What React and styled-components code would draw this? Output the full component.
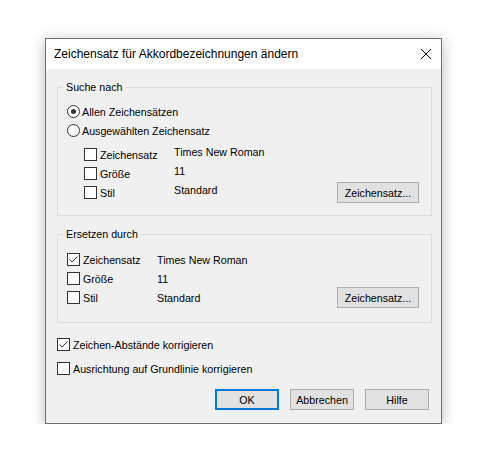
import React from 'react';
import styled, { createGlobalStyle } from 'styled-components';

const font = `"Liberation Sans", Arial, sans-serif`;

const GlobalStyle = createGlobalStyle`
  body {
    margin: 0;
    background: #fff;
    font-family: ${font};
    color: #000;
  }
`;

const Stage = styled.div`
  padding: 38px 0 0 45px;
`;

const Dialog = styled.div`
  width: 397px;
  box-sizing: border-box;
  border: 1px solid #6f6f6f;
  background: #f0f0f0;
  box-shadow: 0 3px 14px rgba(0, 0, 0, 0.28);
  display: flex;
  flex-direction: column;
`;

const TitleBar = styled.div`
  height: 30px;
  background: #fff;
  display: flex;
  align-items: center;
  padding-left: 8px;
`;

const Title = styled.div`
  flex: 1;
  font-size: 12px;
`;

const CloseButton = styled.div`
  width: 30px;
  height: 30px;
  display: flex;
  align-items: center;
  justify-content: center;
`;

const Body = styled.div`
  display: flex;
  flex-direction: column;
  padding: 10px 9px 13px 11px;
  font-size: 10.7px;
`;

const Group = styled.fieldset`
  margin: 0 0 ${(p) => p.$after || 0}px;
  padding: 0;
  border: 1px solid #dcdcdc;
  min-width: 0;
`;

const Legend = styled.legend`
  margin-left: 5px;
  padding: 0 3px;
  line-height: 16px;
  font-size: 10.7px;
`;

const GroupContent = styled.div`
  display: flex;
  flex-direction: column;
  padding: ${(p) => p.$top}px 12px ${(p) => p.$bottom}px 9px;
`;

const Row = styled.div`
  display: flex;
  align-items: center;
  height: 19px;
  margin-top: ${(p) => p.$space || 0}px;
  padding-left: ${(p) => p.$indent || 0}px;
`;

const Field = styled.div`
  width: 90px;
  display: flex;
  align-items: center;
  gap: 3px;
  flex-shrink: 0;
`;

const Choice = styled.div`
  display: flex;
  align-items: center;
  gap: ${(p) => p.$gap || 3}px;
`;

const Value = styled.div`
  flex: 1;
  line-height: 16px;
  margin-bottom: ${(p) => (p.$raised ? 5 : 0)}px;
`;

const Radio = styled.span`
  width: 13px;
  height: 13px;
  box-sizing: border-box;
  border: 1px solid #333;
  border-radius: 50%;
  background: #fff;
  display: flex;
  align-items: center;
  justify-content: center;

  &::after {
    content: '';
    display: ${(p) => (p.$checked ? 'block' : 'none')};
    width: 5px;
    height: 5px;
    border-radius: 50%;
    background: #333;
  }
`;

const Box = styled.span`
  width: 13px;
  height: 13px;
  box-sizing: border-box;
  border: 1px solid #333;
  background: #fff;
  flex-shrink: 0;
  display: flex;

  svg {
    display: block;
  }
`;

const Button = styled.button`
  width: ${(p) => p.$width || 64}px;
  height: 21px;
  margin: ${(p) => (p.$inRow ? '-1px 0' : '0')};
  box-sizing: border-box;
  padding: 0;
  font-family: ${font};
  font-size: 10.7px;
  color: #000;
  background: #e1e1e1;
  border: ${(p) => (p.$default ? '2px solid #0078d7' : '1px solid #adadad')};
  border-radius: 0;
`;

const ButtonBar = styled.div`
  display: flex;
  justify-content: flex-end;
  gap: 11px;
  padding-right: 3px;
  margin-top: 11px;
`;

const CheckBox = ({ checked }) => (
  <Box>
    {checked && (
      <svg width="11" height="11" viewBox="0 0 11 11">
        <path d="M1.5 5.5 L4 8 L9.5 2.5" fill="none" stroke="#333" strokeWidth="1" />
      </svg>
    )}
  </Box>
);

const FontRow = ({ label, value, checked, indent, space, raised, button }) => (
  <Row $indent={indent} $space={space}>
    <Field>
      <CheckBox checked={checked} />
      <span>{label}</span>
    </Field>
    <Value $raised={raised}>{value}</Value>
    {button && (
      <Button $width={82} $inRow>
        Zeichensatz...
      </Button>
    )}
  </Row>
);

export default function App() {
  return (
    <>
      <GlobalStyle />
      <Stage>
        <Dialog>
          <TitleBar>
            <Title>Zeichensatz für Akkordbezeichnungen ändern</Title>
            <CloseButton>
              <svg width="10" height="10" viewBox="0 0 10 10">
                <path d="M0 0 L10 10 M10 0 L0 10" stroke="#000" strokeWidth="1" />
              </svg>
            </CloseButton>
          </TitleBar>

          <Body>
            <Group $after={10}>
              <Legend>Suche nach</Legend>
              <GroupContent $top={7} $bottom={13}>
                <Row>
                  <Choice $gap={2}>
                    <Radio $checked />
                    <span>Allen Zeichensätzen</span>
                  </Choice>
                </Row>
                <Row>
                  <Choice $gap={2}>
                    <Radio />
                    <span>Ausgewählten Zeichensatz</span>
                  </Choice>
                </Row>
                <FontRow indent={17} space={5} raised label="Zeichensatz" value="Times New Roman" />
                <FontRow indent={17} raised label="Größe" value="11" />
                <FontRow indent={17} raised label="Stil" value="Standard" button />
              </GroupContent>
            </Group>

            <Group $after={12}>
              <Legend>Ersetzen durch</Legend>
              <GroupContent $top={8} $bottom={15}>
                <FontRow checked label="Zeichensatz" value="Times New Roman" />
                <FontRow label="Größe" value="11" />
                <FontRow label="Stil" value="Standard" button />
              </GroupContent>
            </Group>

            <Row>
              <Choice>
                <CheckBox checked />
                <span>Zeichen-Abstände korrigieren</span>
              </Choice>
            </Row>
            <Row $space={5}>
              <Choice>
                <CheckBox />
                <span>Ausrichtung auf Grundlinie korrigieren</span>
              </Choice>
            </Row>

            <ButtonBar>
              <Button $default>OK</Button>
              <Button>Abbrechen</Button>
              <Button>Hilfe</Button>
            </ButtonBar>
          </Body>
        </Dialog>
      </Stage>
    </>
  );
}
